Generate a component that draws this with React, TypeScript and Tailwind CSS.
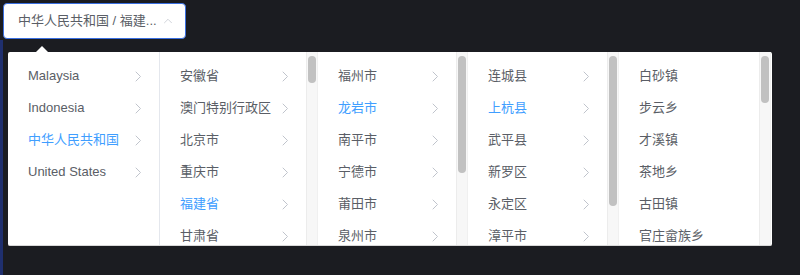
import { ChevronUp } from 'lucide-react'

type Col = {
  items: string[]
  active?: string
  width: string
  thumb?: string
  arrow?: boolean
  border?: boolean
}

const COLUMNS: Col[] = [
  { items: ['Malaysia', 'Indonesia', '中华人民共和国', 'United States'], active: '中华人民共和国', width: 'w-[151px]', arrow: true, border: true },
  { items: ['安徽省', '澳门特别行政区', '北京市', '重庆市', '福建省', '甘肃省'], active: '福建省', width: 'w-[146px]', thumb: 'h-[27px]', arrow: true },
  { items: ['福州市', '龙岩市', '南平市', '宁德市', '莆田市', '泉州市'], active: '龙岩市', width: 'w-[138px]', thumb: 'h-[117px]', arrow: true },
  { items: ['连城县', '上杭县', '武平县', '新罗区', '永定区', '漳平市'], active: '上杭县', width: 'w-[139px]', thumb: 'h-[150px]', arrow: true },
  { items: ['白砂镇', '步云乡', '才溪镇', '茶地乡', '古田镇', '官庄畲族乡'], width: 'w-[140px]', thumb: 'h-[47px]' },
]

function Chevron() {
  return (
    <svg width="7" height="11" viewBox="0 0 7 11" fill="none" className="shrink-0">
      <path d="M1 1l4.5 4.5L1 10" stroke="#c0c4cc" strokeWidth="1" strokeLinecap="round" strokeLinejoin="round" />
    </svg>
  )
}

function Column({ col }: { col: Col }) {
  return (
    <div className={`flex h-full ${col.border ? 'border-r border-[#e4e7ed]' : ''}`}>
      <ul className={`${col.width} h-full overflow-hidden pt-2`}>
        {col.items.map(item => (
          <li
            key={item}
            className={`flex h-8 items-center justify-between pl-5 pr-[17px] text-[13px] whitespace-nowrap ${item === col.active ? 'text-[#409eff]' : 'text-[#5a5e66]'}`}
          >
            <span>{item}</span>
            {col.arrow && <Chevron />}
          </li>
        ))}
      </ul>
      {col.thumb && (
        <div className="w-[12px] h-full bg-[#f7f7f7] border-l border-[#ececec] border-r border-r-[#f0f0f0] flex justify-center pt-1">
          <div className={`w-[8px] ${col.thumb} rounded-full bg-[#c1c1c1]`} />
        </div>
      )}
    </div>
  )
}

export default function App() {
  return (
    <div className="w-[800px] h-[275px] bg-[#1b1c21] flex overflow-hidden" style={{ fontFamily: '"Liberation Sans", "Noto Sans CJK SC", sans-serif' }}>
      <div className="w-[3px] mt-[40px] bg-[#1f2f6e]" />
      <div className="flex flex-col pt-[3px]">
        <div className="w-[183px] h-[36px] bg-white border border-[#3a6fe0] rounded-[4px] flex items-center justify-between pl-[14px] pr-[10px]">
          <span className="text-[13px] text-[#5a5e66] whitespace-nowrap">中华人民共和国 / 福建...</span>
          <ChevronUp className="w-[14px] h-[14px] text-[#c0c4cc]" strokeWidth={1.25} />
        </div>
        <div className="ml-[5px] mt-[7px] flex flex-col">
          <div className="ml-[28px] w-0 h-0 border-l-[6px] border-r-[6px] border-b-[6px] border-l-transparent border-r-transparent border-b-white" />
          <div className="w-[764px] h-[194px] bg-white rounded-[2px] border-b border-[#d8d8d8] flex overflow-hidden">
            {COLUMNS.map((col, i) => (
              <Column key={i} col={col} />
            ))}
          </div>
        </div>
      </div>
    </div>
  )
}
